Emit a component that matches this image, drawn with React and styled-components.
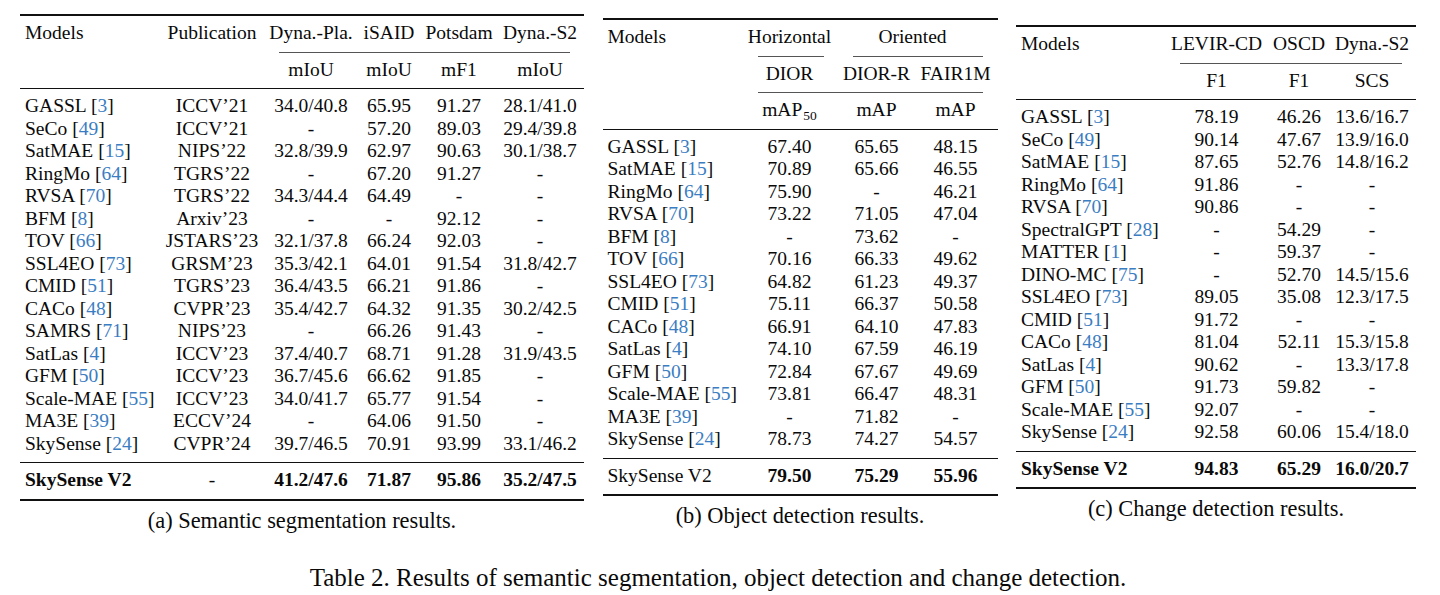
import React from 'react';
import styled, { createGlobalStyle } from 'styled-components';

const GlobalStyle = createGlobalStyle`
  html, body {
    margin: 0;
    padding: 0;
    background: #ffffff;
  }
  body {
    font-family: "Liberation Serif", "Times New Roman", serif;
    color: #0a0a0a;
  }
`;

const Page = styled.div`
  width: 1396px;
  margin-left: 20px;
`;

const Panels = styled.div`
  display: flex;
  align-items: center;
  gap: 18.5px;
  padding-top: 14px;
`;

const Panel = styled.div`
  display: flex;
  flex-direction: column;
  width: ${(p) => p.$width}px;
`;

const Grid = styled.div`
  display: grid;
  grid-template-columns: ${(p) => p.$cols};
  padding-right: ${(p) => p.$pad || 0}px;
`;

const Row = styled(Grid)`
  height: 22.5px;
  font-size: 19.5px;
  line-height: 22.5px;
  white-space: nowrap;
`;

const Cell = styled.div`
  text-align: ${(p) => p.$align || 'center'};
  padding-left: ${(p) => (p.$align === 'left' ? 5 : 0)}px;
  font-weight: ${(p) => (p.$bold ? 700 : 400)};
  grid-column: ${(p) => p.$span || 'auto'};
`;

const Rule = styled.div`
  height: ${(p) => p.$w || 1}px;
  background: #111;
  margin-top: ${(p) => (p.$above === undefined ? 7 : p.$above)}px;
  margin-bottom: ${(p) => (p.$below === undefined ? 6 : p.$below)}px;
`;

const CmidLine = styled(Grid)`
  height: 1px;
  margin: 7px 0 6px;
`;

const CmidSeg = styled.div`
  grid-column: ${(p) => p.$span};
  margin-left: ${(p) => p.$l}px;
  margin-right: ${(p) => p.$r}px;
  background: #555;
`;

const Cite = styled.span`
  color: #3b7dc2;
`;

const Sub = styled.span`
  font-size: 13.5px;
  position: relative;
  top: 4px;
  margin-left: 1px;
`;

const Caption = styled.div`
  margin-top: 7px;
  font-size: 22.4px;
  line-height: 26px;
  text-align: center;
  white-space: nowrap;
`;

const MainCaption = styled.div`
  margin-top: 29.5px;
  font-size: 25px;
  line-height: 30px;
  text-align: center;
  white-space: nowrap;
`;

const Model = ({ name, cite, bold }) => (
  <Cell $align="left" $bold={bold}>
    {name}
    {cite && (
      <>
        {' '}[<Cite>{cite}</Cite>]
      </>
    )}
  </Cell>
);

const segRows = [
  ['GASSL', '3', 'ICCV’21', '34.0/40.8', '65.95', '91.27', '28.1/41.0'],
  ['SeCo', '49', 'ICCV’21', '-', '57.20', '89.03', '29.4/39.8'],
  ['SatMAE', '15', 'NIPS’22', '32.8/39.9', '62.97', '90.63', '30.1/38.7'],
  ['RingMo', '64', 'TGRS’22', '-', '67.20', '91.27', '-'],
  ['RVSA', '70', 'TGRS’22', '34.3/44.4', '64.49', '-', '-'],
  ['BFM', '8', 'Arxiv’23', '-', '-', '92.12', '-'],
  ['TOV', '66', 'JSTARS’23', '32.1/37.8', '66.24', '92.03', '-'],
  ['SSL4EO', '73', 'GRSM’23', '35.3/42.1', '64.01', '91.54', '31.8/42.7'],
  ['CMID', '51', 'TGRS’23', '36.4/43.5', '66.21', '91.86', '-'],
  ['CACo', '48', 'CVPR’23', '35.4/42.7', '64.32', '91.35', '30.2/42.5'],
  ['SAMRS', '71', 'NIPS’23', '-', '66.26', '91.43', '-'],
  ['SatLas', '4', 'ICCV’23', '37.4/40.7', '68.71', '91.28', '31.9/43.5'],
  ['GFM', '50', 'ICCV’23', '36.7/45.6', '66.62', '91.85', '-'],
  ['Scale-MAE', '55', 'ICCV’23', '34.0/41.7', '65.77', '91.54', '-'],
  ['MA3E', '39', 'ECCV’24', '-', '64.06', '91.50', '-'],
  ['SkySense', '24', 'CVPR’24', '39.7/46.5', '70.91', '93.99', '33.1/46.2'],
];

const detRows = [
  ['GASSL', '3', '67.40', '65.65', '48.15'],
  ['SatMAE', '15', '70.89', '65.66', '46.55'],
  ['RingMo', '64', '75.90', '-', '46.21'],
  ['RVSA', '70', '73.22', '71.05', '47.04'],
  ['BFM', '8', '-', '73.62', '-'],
  ['TOV', '66', '70.16', '66.33', '49.62'],
  ['SSL4EO', '73', '64.82', '61.23', '49.37'],
  ['CMID', '51', '75.11', '66.37', '50.58'],
  ['CACo', '48', '66.91', '64.10', '47.83'],
  ['SatLas', '4', '74.10', '67.59', '46.19'],
  ['GFM', '50', '72.84', '67.67', '49.69'],
  ['Scale-MAE', '55', '73.81', '66.47', '48.31'],
  ['MA3E', '39', '-', '71.82', '-'],
  ['SkySense', '24', '78.73', '74.27', '54.57'],
];

const cdRows = [
  ['GASSL', '3', '78.19', '46.26', '13.6/16.7'],
  ['SeCo', '49', '90.14', '47.67', '13.9/16.0'],
  ['SatMAE', '15', '87.65', '52.76', '14.8/16.2'],
  ['RingMo', '64', '91.86', '-', '-'],
  ['RVSA', '70', '90.86', '-', '-'],
  ['SpectralGPT', '28', '-', '54.29', '-'],
  ['MATTER', '1', '-', '59.37', '-'],
  ['DINO-MC', '75', '-', '52.70', '14.5/15.6'],
  ['SSL4EO', '73', '89.05', '35.08', '12.3/17.5'],
  ['CMID', '51', '91.72', '-', '-'],
  ['CACo', '48', '81.04', '52.11', '15.3/15.8'],
  ['SatLas', '4', '90.62', '-', '13.3/17.8'],
  ['GFM', '50', '91.73', '59.82', '-'],
  ['Scale-MAE', '55', '92.07', '-', '-'],
  ['SkySense', '24', '92.58', '60.06', '15.4/18.0'],
];

const SEG_COLS = '138px 108px 90px 66px 74px 88px';
const DET_COLS = '143px 88px 86px 72px';
const CD_COLS = '150px 101px 64px 82px';

const SegTable = () => (
  <Panel $width={564}>
    <Rule $w={2} $above={0} />
    <Row $cols={SEG_COLS}>
      <Cell $align="left">Models</Cell>
      <Cell>Publication</Cell>
      <Cell>Dyna.-Pla.</Cell>
      <Cell>iSAID</Cell>
      <Cell>Potsdam</Cell>
      <Cell>Dyna.-S2</Cell>
    </Row>
    <CmidLine $cols={SEG_COLS}>
      <CmidSeg $span="3 / 7" $l={13} $r={14} />
    </CmidLine>
    <Row $cols={SEG_COLS}>
      <Cell />
      <Cell />
      <Cell>mIoU</Cell>
      <Cell>mIoU</Cell>
      <Cell>mF1</Cell>
      <Cell>mIoU</Cell>
    </Row>
    <Rule />
    {segRows.map(([name, cite, ...vals]) => (
      <Row $cols={SEG_COLS} key={name}>
        <Model name={name} cite={cite} />
        {vals.map((v, i) => (
          <Cell key={i}>{v}</Cell>
        ))}
      </Row>
    ))}
    <Rule />
    <Row $cols={SEG_COLS}>
      <Model name="SkySense V2" bold />
      <Cell>-</Cell>
      <Cell $bold>41.2/47.6</Cell>
      <Cell $bold>71.87</Cell>
      <Cell $bold>95.86</Cell>
      <Cell $bold>35.2/47.5</Cell>
    </Row>
    <Rule $w={2} $below={0} />
    <Caption>(a) Semantic segmentation results.</Caption>
  </Panel>
);

const DetTable = () => (
  <Panel $width={395}>
    <Rule $w={2} $above={0} />
    <Row $cols={DET_COLS} $pad={6}>
      <Cell $align="left">Models</Cell>
      <Cell>Horizontal</Cell>
      <Cell $span="3 / 5">Oriented</Cell>
    </Row>
    <CmidLine $cols={DET_COLS} $pad={6}>
      <CmidSeg $span="2 / 3" $l={12} $r={10} />
      <CmidSeg $span="3 / 5" $l={19} $r={9} />
    </CmidLine>
    <Row $cols={DET_COLS} $pad={6}>
      <Cell />
      <Cell>DIOR</Cell>
      <Cell>DIOR-R</Cell>
      <Cell>FAIR1M</Cell>
    </Row>
    <CmidLine $cols={DET_COLS} $pad={6}>
      <CmidSeg $span="2 / 5" $l={12} $r={9} />
    </CmidLine>
    <Row $cols={DET_COLS} $pad={6}>
      <Cell />
      <Cell>
        mAP<Sub>50</Sub>
      </Cell>
      <Cell>mAP</Cell>
      <Cell>mAP</Cell>
    </Row>
    <Rule />
    {detRows.map(([name, cite, ...vals]) => (
      <Row $cols={DET_COLS} $pad={6} key={name}>
        <Model name={name} cite={cite} />
        {vals.map((v, i) => (
          <Cell key={i}>{v}</Cell>
        ))}
      </Row>
    ))}
    <Rule />
    <Row $cols={DET_COLS} $pad={6}>
      <Model name="SkySense V2" />
      <Cell $bold>79.50</Cell>
      <Cell $bold>75.29</Cell>
      <Cell $bold>55.96</Cell>
    </Row>
    <Rule $w={2} $below={0} />
    <Caption>(b) Object detection results.</Caption>
  </Panel>
);

const CdTable = () => (
  <Panel $width={400}>
    <Rule $w={2} $above={0} />
    <Row $cols={CD_COLS} $pad={3}>
      <Cell $align="left">Models</Cell>
      <Cell>LEVIR-CD</Cell>
      <Cell>OSCD</Cell>
      <Cell>Dyna.-S2</Cell>
    </Row>
    <CmidLine $cols={CD_COLS} $pad={3}>
      <CmidSeg $span="2 / 5" $l={14} $r={11} />
    </CmidLine>
    <Row $cols={CD_COLS} $pad={3}>
      <Cell />
      <Cell>F1</Cell>
      <Cell>F1</Cell>
      <Cell>SCS</Cell>
    </Row>
    <Rule />
    {cdRows.map(([name, cite, ...vals]) => (
      <Row $cols={CD_COLS} $pad={3} key={name}>
        <Model name={name} cite={cite} />
        {vals.map((v, i) => (
          <Cell key={i}>{v}</Cell>
        ))}
      </Row>
    ))}
    <Rule />
    <Row $cols={CD_COLS} $pad={3}>
      <Model name="SkySense V2" bold />
      <Cell $bold>94.83</Cell>
      <Cell $bold>65.29</Cell>
      <Cell $bold>16.0/20.7</Cell>
    </Row>
    <Rule $w={2} $below={0} />
    <Caption>(c) Change detection results.</Caption>
  </Panel>
);

export default function App() {
  return (
    <>
      <GlobalStyle />
      <Page>
        <Panels>
          <SegTable />
          <DetTable />
          <CdTable />
        </Panels>
        <MainCaption>
          Table 2. Results of semantic segmentation, object detection and change detection.
        </MainCaption>
      </Page>
    </>
  );
}
